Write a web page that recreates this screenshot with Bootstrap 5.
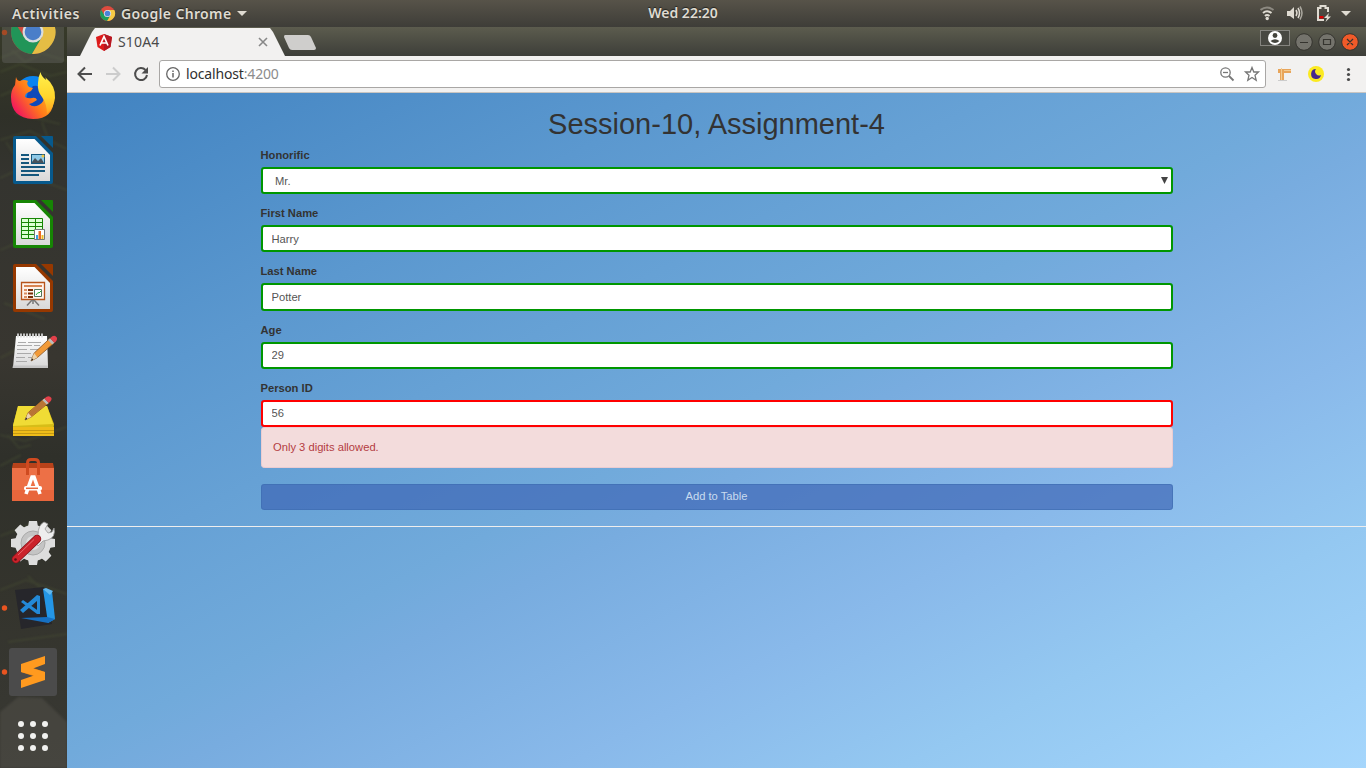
<!DOCTYPE html>
<html lang="en">
<head>
<meta charset="utf-8">
<title>S10A4</title>
<link href="https://cdn.jsdelivr.net/npm/bootstrap@5.3.0/dist/css/bootstrap.min.css" rel="stylesheet">
<style>
body{font-family:"Liberation Sans",Arial,sans-serif;font-size:11.2px;color:#333;width:1366px;height:768px;overflow:hidden;background:#35352f}
svg{display:block;flex:none}
.sysbar{height:27px;background:linear-gradient(#575349,#3e3d38);color:#dfdbd2;font:600 14px/25px "Noto Sans",sans-serif;text-shadow:0 -1px 1px #24231f;display:grid;grid-template-columns:1fr auto 1fr}
.sysbar .app-icon{margin:0 5px 0 19px}
.caret{width:0;height:0;border:5px solid transparent;border-top-color:#dfdbd2;border-bottom:0;margin-left:6px}
.dock{width:67px;height:741px;overflow:hidden;background:linear-gradient(#373a29,#2f3028 12%,#34342f 20%,#383630 45%,#2f302a 58%,#34342d 78%,#393934);position:relative}
.dock-texture{position:absolute;inset:0;filter:blur(1px)}
.dock-items{margin-top:-27px;position:relative}
.tabstrip{height:29px;background:linear-gradient(#5c5c4e,#3d3e39)}
.toolbar{height:37px;background:#f2f1f0;border-bottom:1px solid #c9c5c1}
.omnibox{width:1107px;height:28px;border:1px solid #a9a7a5;border-radius:3px;background:#fff;font:14px/26px "Noto Sans",sans-serif}
.port{color:#8c8c8c}
.ui-tab{width:206px;height:28px;margin:1px 0 0 13px;background:#f2f1f0;clip-path:polygon(0 100%,12px 4px,15px 0,190px 0,193px 4px,205px 100%);font:14px/28px "Noto Sans",sans-serif;color:#4a4a4a;padding-left:16px}
.page{height:675px;background:linear-gradient(to bottom right,#4183c1,#5b98cf 24%,#66a1d5 36%,#71aadb 49%,#78acdf 54%,#89b9ea 69%,#94c8f1 82%,#a5d6fc)}
.form-area{width:912px;margin:0 auto}
.form-area h1{font-size:29px;line-height:32px;padding-top:15px;height:54px;margin:0;font-weight:400;color:#333}
.form-group{height:58.2px}
.form-group label{font-weight:700;line-height:16px;height:20px;display:block;color:#333}
.form-group .form-control,.form-group .form-select{height:27.2px;font-size:11.2px;line-height:16px;border:2px solid #009600;border-radius:3.2px;padding:4px 9px;color:#555;background-color:#fff}
.form-group .form-select{padding-left:12.5px;background-image:url("data:image/svg+xml,%3Csvg xmlns='http://www.w3.org/2000/svg' viewBox='0 0 7 7'%3E%3Cpath d='M0 0h7L3.5 7z' fill='%23444'/%3E%3C/svg%3E");background-size:7px 7px;background-position:right 3px top 7.5px}
.form-group .form-control.bad{border-color:#f00}
.form-group.last-group{height:47.2px}
.error-box{height:41px;background:#f3dcdc;border:1px solid #ebccd1;border-radius:3.2px;padding:11px 11.5px;line-height:16px;color:#b43c42;margin:0 0 16px}
.form-area .btn-add{height:26.4px;font-size:11.2px;line-height:15px;padding:3px 4px 5px;background:#3d65b5b0;border:1px solid #3c6cb09c;color:#c9dbef;border-radius:3.2px}
.split{height:1px;background:#eee;margin-top:15.5px}
</style>
<script src="https://cdn.jsdelivr.net/npm/bootstrap@5.3.0/dist/js/bootstrap.bundle.min.js"></script>
</head>
<body>
<svg width="0" height="0" class="position-absolute"><defs>
<g id="chrome"><circle r="22" fill="#dd4b3e"/><path d="M-19-11A22 22 0 0 0-1 22L9 5 0 10-9 5z" fill="#1d9d5b"/><path d="M-1 22A22 22 0 0 0 20-10H0L9 5z" fill="#f6ca45"/><circle r="10.500" fill="#e9edf0"/><circle r="8.300" fill="#4a84d8"/></g>
<linearGradient id="paper" x2="0" y2="1"><stop stop-color="#fff"/><stop offset="1" stop-color="#d8d8d8"/></linearGradient>
<g id="sheet"><path d="M15 8H36L53 25V54Q53 56 51 56H15Q13 56 13 54V10Q13 8 15 8z"/><path d="M41 8H52Q53 8 53 9V20z"/><path d="M16 11H34.500L50 27V53H16z" fill="url(#paper)"/></g>
<linearGradient id="fire" x1=".8" y1=".3" x2=".1" y2=".8"><stop stop-color="#ffb020"/><stop offset=".45" stop-color="#ff7a1a"/><stop offset="1" stop-color="#f2195c"/></linearGradient>
<linearGradient id="flame" x2="0" y2="1"><stop stop-color="#fff14d"/><stop offset=".6" stop-color="#ffd52b"/><stop offset="1" stop-color="#ff9d1f"/></linearGradient>
<g id="pencil"><path d="M0 0 3-7 18-20 22-16 6-3z" fill="#f29a38" stroke="#85501e" stroke-width=".7"/><path d="M0 0 3-7 6-3z" fill="#ecd3aa"/><path d="M0 0 1-2.500 2.200-1z" fill="#222"/><path d="M16-18.500 18-20 22-16 20-14.500z" fill="#bbb"/><path d="M18-20Q22-24 24.500-20.500 25-18 22-16z" fill="#e3404a"/></g>
<g id="dots"><circle cx="21" cy="20" r="3"/><circle cx="33" cy="20" r="3"/><circle cx="45" cy="20" r="3"/></g>
</defs></svg>

<header class="sysbar">
  <div class="d-flex align-items-center"><span style="margin-left:12px;letter-spacing:.55px">Activities</span>
    <svg class="app-icon" width="17" height="17" viewBox="-25 -25 50 50"><use href="#chrome"/></svg>
    <span style="letter-spacing:.35px">Google Chrome</span><span class="caret"></span></div>
  <div>Wed 22:20</div>
  <div class="d-flex align-items-center justify-content-end">
    <svg width="106" height="27" viewBox="1260 0 106 27"><g fill="none" stroke="#dfdbd2" stroke-width="2"><path d="M1260.500 10Q1267 5 1273.500 10" stroke="#8c8981"/><path d="M1263 13Q1267 9.500 1271.500 13"/><path d="M1265 16Q1267 14 1269.500 16"/></g><circle cx="1267.200" cy="18.500" r="1.700" fill="#dfdbd2"/><path d="M1287 11H1290L1294 7V19L1290 16H1287z" fill="#dfdbd2"/><g fill="none" stroke="#dfdbd2" stroke-width="1.500"><path d="M1296 10Q1298 13 1296 16M1298 8Q1301 13 1298 18"/><path d="M1300 6.500Q1304 13 1300 19.500" stroke="#aaa79e"/></g><path d="M1324 20H1318V8H1320.500V6H1325.500V8H1328V12" fill="none" stroke="#dfdbd2" stroke-width="2"/><path d="M1319.500 16H1323.500V18.500H1319.500z" fill="#d00"/><path d="M1329 13 1324 18H1327L1325.500 22 1331 16.500H1328z" fill="#dfdbd2"/><path d="M1341 11H1351L1346 16z" fill="#dfdbd2"/></svg>
  </div>
</header>

<main class="d-flex">
<nav class="dock flex-shrink-0">
  <svg class="dock-texture" width="67" height="741" viewBox="0 27 67 741"><g fill="none" stroke="#56613a" stroke-width="2" opacity=".28"><path d="M0 58 25 48 67 61M0 72 20 64 50 76 67 72M0 96 30 83M15 113 60 124M0 140 30 131 67 149M0 178 15 171 67 190M0 250 22 241M4 303 45 319M0 358 35 340M0 435 25 441 67 427M0 466 21 455M0 536 35 523M0 590 26 580 67 594M8 642 67 634"/><path d="M12 50 25 62 40 55M42 122 48 139M6 142 14 154M8 435 19 448 31 445M28 576 42 590"/></g><path d="M0 712 18 697 42 698 67 722V768H0z" fill="#5a5751" opacity=".4"/></svg>
  <div class="dock-items d-flex flex-column">
    <svg width="67" height="64"><rect x="2" y="14" width="62" height="49" rx="3" fill="#777" opacity=".32"/><circle cx="4.500" cy="32.500" r="2.700" fill="#a44a25"/><use href="#chrome" transform="translate(33 32)" opacity=".9"/></svg>
    <svg width="67" height="64"><circle cx="33" cy="30" r="18" fill="#0a84f0"/><path d="M33 22Q44 20 45 32T34 44L25 38 28 28z" fill="#1236a8" opacity=".75"/><path d="M16 13Q17 17 20 17 24 15 28 17 26 20 29 23L33 24 31 27 27 29Q25 30 25 33 29 35 32 34 36 33 37 36 33 39 29 40 33 44 39 41 45 38 44 30L54 34Q54 55 33 55 11 54 11 33 11 26 15 21z" fill="url(#fire)"/><path d="M40.500 8Q41 12 46 16 46 14 45 13 56 22 55 34 54 43 47 50 47 40 42 33 37 27 38 19 38 13 40.500 8z" fill="url(#flame)"/></svg>
    <svg width="67" height="64"><use href="#sheet" fill="#07598c"/><g fill="#14577d"><path d="M21 26h8v2h-8zM21 30h8v2h-8zM21 34h8v2h-8zM21 38h24v2H21zM21 42h24v2H21zM21 46h18v2H21z"/><path d="M31 26h14v10H31z"/></g><path d="M32 27h12v8H32z" fill="#8ec9e7"/><path d="M32 34 35 30 38 33 41 30 44 35H32z" fill="#47525a"/><circle cx="43" cy="28" r="1.500" fill="#f2c641"/></svg>
    <svg width="67" height="64"><use href="#sheet" fill="#168504"/><path d="M21.500 26.500H42.500V46.500H21.500z" fill="#dbffd3" stroke="#168504"/><path d="M21 30.500H43M21 34.500H43M21 38.500H43M21 42.500H43M28.500 26V47M35.500 26V47" stroke="#168504"/><path d="M34.500 37.500H44.500V47.500H34.500z" fill="#fff" stroke="#777"/><path d="M36 43H38V47H36z" fill="#36a2e4"/><path d="M38.500 39H41V47H38.500z" fill="#ec6a22"/><path d="M41.500 43H43.500V47H41.500z" fill="#edbd24"/></svg>
    <svg width="67" height="64"><use href="#sheet" fill="#963800"/><path d="M21.500 26.500H44.500V43.500H21.500z" fill="#fff4ed" stroke="#b6531b" stroke-width="1.300"/><path d="M24 30H42" stroke="#cb611f" stroke-width="1.500"/><path d="M24 34h3M24 37.500h3M24 41h3" stroke="#d98d62" stroke-width="2"/><path d="M28 34h5M28 37.500h5M28 41h5" stroke="#7b2c06" stroke-width="2"/><path d="M34.500 33.500h7v7h-7z" fill="#fff" stroke="#52735a"/><path d="M36 39 38 36.500 39 37 41 35" stroke="#25aa30" fill="none"/><path d="M32 44 27 49.500M34 44 39 49.500M33 44V48" stroke="#777" stroke-width="1.500"/></svg>
    <svg width="67" height="64"><path d="M16 16H47L48 46 13 47z" fill="url(#paper)"/><path d="M13 45.500H48V48H12.500z" fill="#c4c4c4"/><path d="M18 13.500v4M21 13.500v4M24 13.500v4M27 13.500v4M30 13.500v4M33 13.500v4M36 13.500v4M39 13.500v4M42 13.500v4" stroke="#ddd" stroke-width="1.700"/><path d="M18 22.500h8m2 0h13M17 25.500h15m2 0h6M17 29.500h10m3 0h9M17 33.500h14M16 37.500h9m3 0h5M16 41.500h11" stroke="#aaa"/><use href="#pencil" transform="translate(31 41) scale(1.06 1.14)"/></svg>
    <svg width="67" height="64"><path d="M18 22H47L54 40 53 52H13V41z" fill="#d7bd18"/><path d="M18 22H47L53 40 13 42z" fill="#f0dc35"/><path d="M13 43H54V52H13z" fill="#efbd19"/><path d="M13 46.500H54M13 49.500H54" stroke="#c59a14"/><g transform="translate(25 36) scale(1.08 1.07)"><use href="#pencil"/><path d="M3-6.500 16-18.500 20-14.500 6-3.500z" fill="#b97435"/></g></svg>
    <svg width="67" height="64"><path d="M13 15H53L54 20H12z" fill="#b8421a"/><path d="M12 20H54V52Q54 53 53 53H13Q12 53 12 52z" fill="#ed7046"/><path d="M12 42H54V53H12z" fill="#e8663c"/><path d="M27.500 27V15Q27.500 11.500 31 11.500H35Q38.500 11.500 38.500 15V27" fill="none" stroke="#cf4a20" stroke-width="3"/><path d="M26 46 32 29H34L40 46" fill="none" stroke="#fff" stroke-width="3.600"/><rect x="24" y="38" width="18" height="4.500" rx="2" fill="#fff"/><path d="M26 40.300H38" stroke="#e7683f" stroke-width="1.500"/></svg>
    <svg width="67" height="64"><g transform="translate(33 31)" fill="#ddd"><circle r="18"/><path d="M-4-22H4L5-16H-5zM-4 22H4L5 16H-5zM-22-4V4L-16 5V-5zM22-4V4L16 5V-5z"/><path d="M-4-22H4L5-16H-5zM-4 22H4L5 16H-5zM-22-4V4L-16 5V-5zM22-4V4L16 5V-5z" transform="rotate(45)"/><circle r="12" fill="#c4c4c4" stroke="#aaa"/><circle r="7" fill="#dedede"/></g><path d="M38 23Q38 13 44 10L48 12 45 17 48 21 52 20 54 16Q56 25 48 28L43 29 38 34 34 28z" fill="#eee" stroke="#999" stroke-width=".8"/><path d="M16 47 37 27" stroke="#82151c" stroke-width="8.500" stroke-linecap="round"/><path d="M16 47 37 27" stroke="#cb232b" stroke-width="7" stroke-linecap="round"/><path d="M18 43 34 27.500" stroke="#e7666a"/><circle cx="15.500" cy="47.500" r="1.300" fill="#5c1015"/></svg>
    <svg width="67" height="64"><circle cx="4.500" cy="32" r="2.700" fill="#e95420"/><path d="M15 14 44 11 52 48 21 53z" fill="#26262b"/><path d="M43 13 52 15 55 43 48 47z" fill="#2496e6"/><path d="M43 13 46 12 53 15 50 19z" fill="#62b9f0"/><path d="M21 42 48 47 55 43 47 41z" fill="#1670c2"/><path d="M21 26 23 24 40 36V38H37zM20 34 37 19 40 20V37L37 36V25L23 37z" fill="#2389d7"/></svg>
    <svg width="67" height="64"><circle cx="4.500" cy="32" r="2.700" fill="#e95420"/><rect x="9" y="8" width="48" height="48" rx="3" fill="#4b4b4b"/><path d="M21 32 33 28 45 32V40L33 36z" fill="#e27e13"/><path d="M21 24 45 16V24L33 28.500 45 32V40L21 48V40L34 35.500 21 32z" fill="#ff9a1f"/></svg>
    <svg width="67" height="64" fill="#f1f1ef"><use href="#dots"/><use href="#dots" y="12"/><use href="#dots" y="24"/></svg>
  </div>
</nav>

<section class="flex-grow-1">
  <div class="tabstrip d-flex justify-content-between">
    <div class="d-flex">
      <div class="ui-tab d-flex align-items-center"><svg width="16" height="17" viewBox="0 0 16 17"><path d="M8 0 16 3 14.500 13 8 17 1.500 13 0 3z" fill="#dd1b1b"/><path d="M8 0 16 3 14.500 13 8 17z" fill="#b51822"/><path d="M4 11.500 8 2.500 12 11.500M5.500 9H10.500" stroke="#fff" stroke-width="1.700" fill="none"/></svg><span style="margin-left:6px;letter-spacing:.15px">S10A4</span><svg style="margin-left:98.5px" width="10" height="10"><path d="M1 1 9 9M9 1 1 9" stroke="#888" stroke-width="1.600"/></svg></div>
      <svg width="38" height="29" viewBox="286 27 38 29" overflow="visible"><path d="M285 35H308Q310 35 311 37L316 48Q316 50 314 50H292Q290 50 289 48L284 37Q284 35 285 35z" fill="#cfcecc"/></svg>
    </div>
    <svg width="110" height="29" viewBox="1256 27 110 29"><rect x="1260.500" y="30.500" width="29" height="15" fill="#484842" stroke="#85847f"/><circle cx="1275" cy="38" r="7" fill="#fff"/><circle cx="1275" cy="35.500" r="2.400" fill="#45453e"/><path d="M1270.500 41Q1275 37.500 1279.500 41 1275 45 1270.500 41" fill="#45453e"/><g stroke="#35342f"><circle cx="1304" cy="42" r="8.300" fill="#74736c"/><circle cx="1327" cy="42" r="8.300" fill="#74736c"/><circle cx="1350" cy="42" r="8.300" fill="#f05a29"/><path d="M1300 42.500H1308M1323.500 39.500H1330.500V44.500H1323.500zM1347 39 1353 45M1353 39 1347 45" fill="none" stroke-width="1.200"/></g></svg>
  </div>
  <div class="toolbar d-flex align-items-center">
    <svg width="92" height="36" viewBox="67 56 92 36" fill="none" stroke-width="2"><path d="M92 74H79M85 67.500 78.500 74 85 80.500" stroke="#4d4d4d"/><path d="M106 74H119M113 67.500 119.500 74 113 80.500" stroke="#ccc"/><path d="M145.500 70A6 6 0 1 0 147 75" stroke="#4d4d4d"/><path d="M148 67V73.500H141.500z" fill="#4d4d4d"/></svg>
    <div class="omnibox d-flex align-items-center"><svg style="margin-left:6px" width="14" height="14" viewBox="0 0 14 14"><circle cx="7" cy="7" r="6.300" fill="none" stroke="#666" stroke-width="1.300"/><path d="M7 6V10.500M7 3.500V5" stroke="#666" stroke-width="1.500"/></svg><span style="margin-left:6px;letter-spacing:-.16px;color:#303030">localhost<span class="port">:4200</span></span>
      <svg class="ms-auto" width="50" height="26" viewBox="1215 61 50 26" fill="none" stroke="#777" stroke-width="1.300"><circle cx="1225.500" cy="72.500" r="4.700"/><path d="M1229 76 1233.500 80.500" stroke-width="1.800"/><path d="M1223 72.500H1228"/><path d="M1252 67.500 1253.800 72H1258.500L1255 75.300 1256.200 80.300 1252 77.500 1247.800 80.300 1249 75.300 1245.500 72H1250.200z"/></svg></div>
    <svg width="100" height="36" viewBox="1266 56 100 36"><path d="M1278 69H1291V73H1284V80H1280V73H1278z" fill="#e8a55a"/><path d="M1281.500 68V80M1284 70.500H1291" stroke="#f4cd93" fill="none"/><path d="M1278 80.500H1287" stroke="#ccc"/><circle cx="1316" cy="74" r="8" fill="#fbea21"/><path d="M1316 69A5 5 0 1 0 1321 75 4 4 0 0 1 1316 69" fill="#46278c"/><g fill="#4a4a4a"><circle cx="1348.500" cy="69.500" r="1.600"/><circle cx="1348.500" cy="74.500" r="1.600"/><circle cx="1348.500" cy="79.500" r="1.600"/></g></svg>
  </div>
  <div class="page">
    <form class="form-area">
      <h1 class="text-center">Session-10, Assignment-4</h1>
      <div class="form-group"><label for="hon">Honorific</label><select id="hon" class="form-select"><option>Mr.</option></select></div>
      <div class="form-group"><label for="fn">First Name</label><input id="fn" class="form-control" value="Harry"></div>
      <div class="form-group"><label for="ln">Last Name</label><input id="ln" class="form-control" value="Potter"></div>
      <div class="form-group"><label for="age">Age</label><input id="age" class="form-control" value="29"></div>
      <div class="form-group last-group"><label for="pid">Person ID</label><input id="pid" class="form-control bad" value="56"></div>
      <div class="error-box">Only 3 digits allowed.</div>
      <button type="button" class="btn btn-primary btn-add w-100 d-block">Add to Table</button>
    </form>
    <div class="split"></div>
  </div>
</section>
</main>
</body>
</html>
